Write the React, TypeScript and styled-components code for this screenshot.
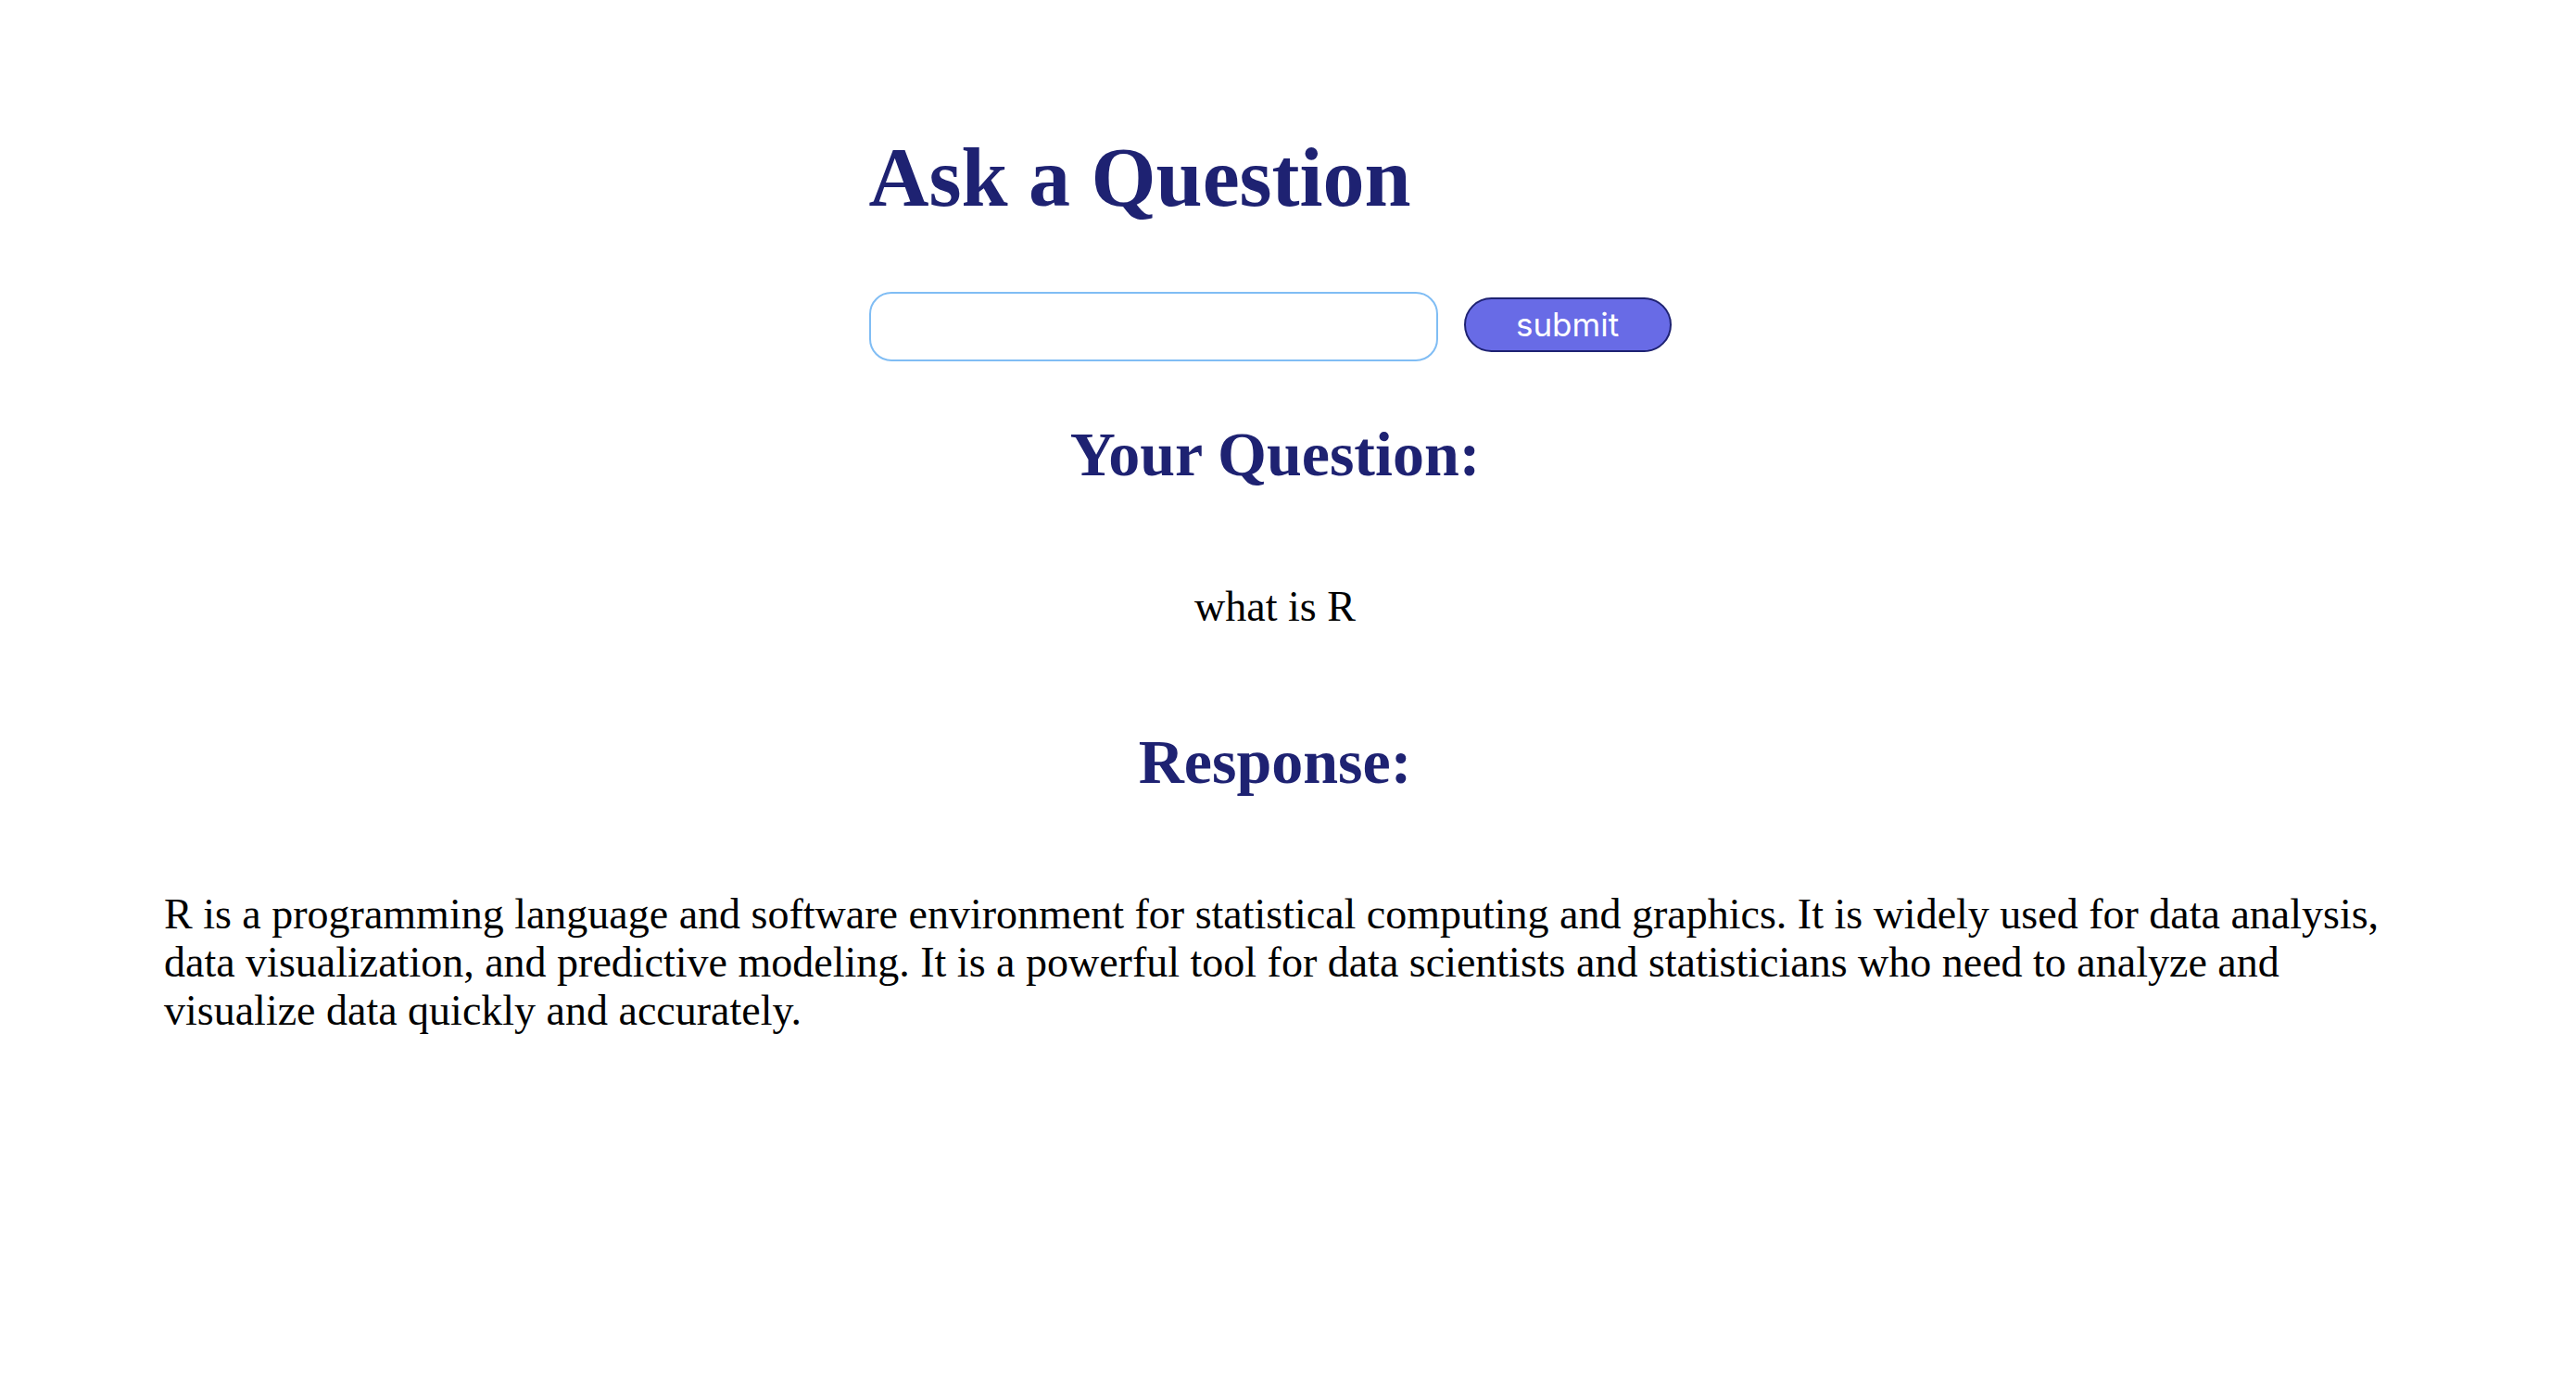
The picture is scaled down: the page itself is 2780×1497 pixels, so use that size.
import React from "react";
import styled, { createGlobalStyle } from "styled-components";

const GlobalStyle = createGlobalStyle`
  html, body {
    margin: 0;
    padding: 0;
    background: #ffffff;
  }
  body {
    font-family: "Liberation Serif", "Times New Roman", serif;
    font-size: 46px;
    color: #000000;
  }
`;

const Page = styled.main`
  display: flex;
  flex-direction: column;
  padding: 142px 205px 80px 177px;
`;

const AskBlock = styled.section`
  align-self: center;
  width: 877px;
  display: flex;
  flex-direction: column;
`;

const Title = styled.h1`
  margin: 0 0 73px 0;
  font-size: 90px;
  line-height: 100px;
  font-weight: 700;
  color: #1e2272;
`;

const FormRow = styled.form`
  display: flex;
  align-items: center;
  gap: 28px;
`;

const QuestionInput = styled.input`
  box-sizing: border-box;
  width: 614px;
  height: 75px;
  border: 2px solid #80bdf4;
  border-radius: 24px;
  padding: 0 20px;
  font-family: "Liberation Sans", Arial, sans-serif;
  font-size: 30px;
  outline: none;
  background: #ffffff;
`;

const SubmitButton = styled.button`
  box-sizing: border-box;
  width: 224px;
  height: 59px;
  margin-bottom: 4px;
  border: 2px solid #1e2272;
  border-radius: 30px;
  background: #686be6;
  color: #ffffff;
  font-family: Inter, "Liberation Sans", Arial, sans-serif;
  font-size: 35px;
  padding: 0 0 2px 0;
  cursor: pointer;
`;

const SectionTitle = styled.h2<{ $top: number }>`
  margin: ${(p) => p.$top}px 0 0 0;
  font-size: 68px;
  line-height: 76px;
  font-weight: 700;
  color: #1e2272;
  text-align: center;
`;

const QuestionText = styled.p`
  margin: 101px 0 0 0;
  font-size: 46px;
  line-height: 52px;
  text-align: center;
`;

const ResponseText = styled.p`
  margin: 101px -35px 0 0;
  font-size: 46px;
  line-height: 52px;
  text-align: left;
`;

export default function App() {
  return (
    <>
      <GlobalStyle />
      <Page>
        <AskBlock>
          <Title>Ask a Question</Title>
          <FormRow onSubmit={(e) => e.preventDefault()}>
            <QuestionInput type="text" aria-label="question" />
            <SubmitButton type="submit">submit</SubmitButton>
          </FormRow>
        </AskBlock>
        <SectionTitle $top={62}>Your Question:</SectionTitle>
        <QuestionText>what is R</QuestionText>
        <SectionTitle $top={103}>Response:</SectionTitle>
        <ResponseText>
          R is a programming language and software environment for statistical
          computing and graphics. It is widely used for data analysis, data
          visualization, and predictive modeling. It is a powerful tool for data
          scientists and statisticians who need to analyze and visualize data
          quickly and accurately.
        </ResponseText>
      </Page>
    </>
  );
}
